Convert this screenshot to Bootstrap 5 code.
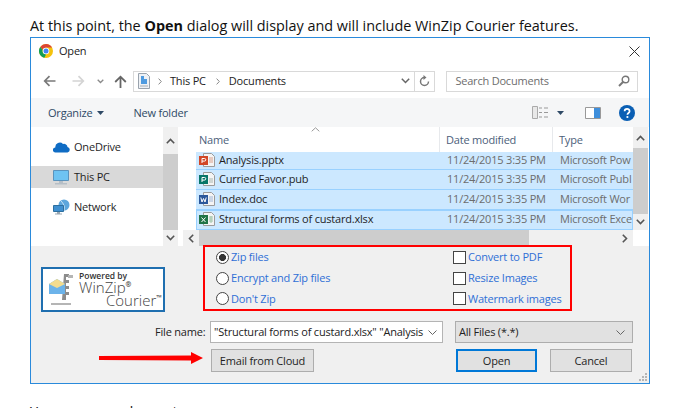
<!doctype html>
<html lang="en">
<head>
<meta charset="utf-8">
<title>Open dialog</title>
<link href="https://cdn.jsdelivr.net/npm/bootstrap@5.3.0/dist/css/bootstrap.min.css" rel="stylesheet">
<style>
html,body{height:408px;overflow:hidden;background:#fff}
body{font-family:"Open Sans","Liberation Sans",sans-serif;color:#1f1f1f}
.intro{margin:0 0 0 30px;padding-top:15px;height:37px;font-size:14.4px;line-height:22px;color:#111;white-space:nowrap}
.intro b{font-weight:700}
.outro{margin:0 0 0 30px;padding-top:17px;font-size:14.4px;line-height:22px;color:#111;white-space:nowrap}
.dlg{margin-left:30px;width:620px;height:347px;border:1px solid #2a8adb;background:#fff;font-size:11px;line-height:14px;letter-spacing:-.2px;position:relative}
.dlg svg{display:block;flex:none}
.titlebar{height:26px;padding:0 9px 0 8px;color:#222}
.titlebar .ttl{margin-left:6px}
.navrow{height:34px;padding:0 11px 0 12px}
.mfwd{margin-left:16px}.mchev{margin-left:12px}.mup{margin-left:10px}
.addr{margin-left:6px;width:303px;height:21px;border:1px solid #d9d9d9}
.addr .seg{color:#222}
.addr .gt{margin:0 8px}
.addr .seg + .gt{margin:0 9px 0 10px}
.addr .refresh{width:20px;height:19px;border-left:1px solid #d9d9d9}
.searchbox{margin-left:11px;width:192px;height:21px;border:1px solid #d9d9d9;padding:0 7px 0 8px;color:#6d6d6d}
.toolbar{height:29px;background:#f5f6f7;padding:0 14px 0 17px;color:#2f4a66}
.mcar{margin-left:5px}.mnew{margin-left:29px}.mcar2{margin-left:9px}.mpane{margin-left:21px}.mhelp{margin-left:18px}
.browse{height:119px;background:#fff}
.navpane{width:132px;padding-top:9px}
.navitem{height:22px;margin-bottom:8px;padding-left:22px;color:#1f1f1f}
.navitem svg{margin-right:4px}
.navitem.on svg{margin-right:5px}
.navitem.on{background:#d9d9d9}
.vbar{width:15px;background:#f0f0f0}
.vbtn{height:16px;flex:none}
.vbtn.t27{height:27px}.vbtn.t21{height:21px}
.vthumb{background:#cdcdcd}
.gapstrip{width:5px}
.fileside{width:450px}
.listhead{height:25px;position:relative;color:#4c607a}
.hcell{height:25px;padding-left:3px}
.hname{width:257px;padding-left:16px;border-right:1px solid #e7e9ec}
.hdate{width:113px;padding-left:6px;border-right:1px solid #e7e9ec}
.htype{padding-left:6px}
.sortcaret{position:absolute;left:128px;top:0}
.frow{height:20px;margin-left:13px;padding-bottom:1px;background:#cce8ff;border-bottom:1px solid #99d1ff;color:#6d6d6d;white-space:nowrap;overflow:hidden}
.frow:first-child{height:18px}
.fname{width:244px;padding-left:3px;color:#1f1f1f;gap:4px}
.fdate{width:113px;padding-left:7px}
.ftype{padding-left:7px}
.frow.last{outline:1px solid #99d1ff;outline-offset:-1px}
.hbar{height:16px;background:#f0f0f0}
.hbtn{width:16px}
.hthumb{width:330px;background:#cdcdcd}
.rightcol{width:15px;background:#f0f0f0}
.cornerwhite{height:16px;background:#fff;flex:none}
.foot{flex:1;background:#f0f0f0;position:relative;padding-left:10px;color:#222}
.footmain{height:75px}
.logobox{width:124px;height:45px;margin-top:21px;border:2px solid #1f6fb0;background:#fff;position:relative;overflow:hidden;padding-left:36px;color:#444;letter-spacing:0}
.logobox svg{position:absolute;left:5px;top:4px}
.lpow{font-size:8.5px;font-weight:600;line-height:10px;margin-top:2px;color:#333}
.lwin{font-size:15px;line-height:13px;font-weight:300}
.lcou{font-size:15px;line-height:13px;font-weight:300;margin-left:27px;white-space:nowrap}
.lwin sup,.lcou sup{font-size:7px;font-weight:700;top:-6px;line-height:0;vertical-align:baseline;position:relative}
.redbox{margin-left:38px;width:369px;height:66px;margin-top:-1px;border:2px solid #f00;padding:0 0 0 11px;color:#2f6fd6;flex:none}
.optcol{width:237px}
.optrow{height:21px;gap:2px}
.redbox .form-check-input{margin:0;width:13px;height:13px;float:none;border:1px solid #444;background-color:#fff;background-image:none;border-radius:0;flex:none;box-shadow:none;opacity:1}
.redbox .form-check-input[type=radio]{border-radius:50%}
.redbox .form-check-input[type=radio]:checked{border-color:#444;background-image:radial-gradient(circle,#333 0 3.2px,#fff 3.8px)}
.fileline{height:22px}
.fnlabel{margin-left:114px;width:55px;flex:none;color:#222}
.fninput{width:233px;height:22px;border:1px solid #b4b4b4;background:#fff;padding:0 5px 0 3px;white-space:nowrap;overflow:hidden}
.fninput svg{margin-left:auto}
.filter{margin-left:12px;width:178px;height:22px;background:#e1e1e1;border:1px solid #adadad;padding:0 7px 0 3px}
.btnline{height:23px;margin-top:6px;position:relative}
.winbtn{height:23px;padding:0;border-radius:0;background:#e1e1e1;border:1px solid #adadad;font-size:11px;line-height:14px;letter-spacing:-.2px;color:#1f1f1f;flex:none}
.redarrow{margin:3px 8px 0 58px}
.bemail{width:103px}
.bopen{margin-left:142px;width:81px;border:2px solid #0078d7}
.bcancel{margin-left:13px;width:82px}
.grip{position:absolute;right:1px;bottom:1px}
</style>
</head>
<body>
<p class="intro">At this point, the <b>Open</b> dialog will display and will include WinZip Courier features.</p>
<div class="dlg d-flex flex-column">
  <div class="titlebar d-flex align-items-center justify-content-between flex-none">
    <div class="d-flex align-items-center">
      <svg width="14" height="14" viewBox="0 0 14 14"><circle cx="7" cy="7" r="7" fill="#f4c20d"/><path d="M7 0a7 7 0 0 1 6.100 3.500H7A3.500 3.500 0 0 0 3.700 6L1.300 2.900A7 7 0 0 1 7 0z" fill="#db4437"/><path d="M1.300 2.900 3.700 6A3.500 3.500 0 0 0 7 10.500L5.400 13.800A7 7 0 0 1 1.300 2.900z" fill="#0f9d58"/><circle cx="7" cy="7" r="3.300" fill="#fff"/><circle cx="7" cy="7" r="2.500" fill="#4285f4"/></svg>
      <span class="ttl">Open</span>
    </div>
    <svg width="11" height="11" viewBox="0 0 11 11"><path d="M.5.500l10 10M10.500.500l-10 10" stroke="#333" fill="none"/></svg>
  </div>
  <div class="navrow d-flex align-items-center flex-none">
    <svg width="13" height="12" viewBox="0 0 13 12"><path d="M12.500 6H2M6.500 1.200 1.700 6l4.800 4.800" stroke="#7a7a7a" stroke-width="1.700" fill="none"/></svg>
    <svg class="mfwd" width="13" height="12" viewBox="0 0 13 12"><path d="M.5 6H11M6.500 1.200 11.300 6l-4.800 4.800" stroke="#d4d4d4" stroke-width="1.700" fill="none"/></svg>
    <svg class="mchev" width="7" height="5" viewBox="0 0 7 5"><path d="M.7.700 3.500 3.500 6.300.7" stroke="#8a8a8a" stroke-width="1.300" fill="none"/></svg>
    <svg class="mup" width="13" height="13" viewBox="0 0 13 13"><path d="M6.500 13V2M1.200 7 6.500 1.700 11.800 7" stroke="#666" stroke-width="1.800" fill="none"/></svg>
    <div class="addr d-flex align-items-center ps-1">
      <svg width="12" height="16" viewBox="0 0 12 16"><path d="M.5.500h8l3 3v12H.5z" fill="#eef1f5" stroke="#9aa3ad"/><path d="M3 3h3v3h3v5H3z" fill="#4f9be0"/><path d="M2 12h8v2H2z" fill="#c9ced4"/></svg>
      <svg class="gt" width="4" height="7" viewBox="0 0 4 7"><path d="M.6.600 3.300 3.500.6 6.400" stroke="#888" fill="none"/></svg>
      <span class="seg">This PC</span>
      <svg class="gt" width="4" height="7" viewBox="0 0 4 7"><path d="M.6.600 3.300 3.500.6 6.400" stroke="#888" fill="none"/></svg>
      <span class="seg">Documents</span>
      <svg class="ms-auto me-1" width="9" height="6" viewBox="0 0 9 6"><path d="M.8.800 4.500 4.500 8.200.8" stroke="#666" stroke-width="1.500" fill="none"/></svg>
      <div class="refresh d-flex align-items-center justify-content-center"><svg width="11" height="12" viewBox="0 0 11 12"><path d="M5.500 2.500a4 4 0 1 0 4 4" stroke="#777" stroke-width="1.500" fill="none"/><path d="M4.500 0v5l3-2.500z" fill="#777"/></svg></div>
    </div>
    <div class="searchbox d-flex align-items-center justify-content-between">
      <span>Search Documents</span>
      <svg width="12" height="12" viewBox="0 0 12 12"><circle cx="7.500" cy="4.500" r="3.300" stroke="#777" stroke-width="1.400" fill="none"/><path d="M5 7 1 11" stroke="#777" stroke-width="2" fill="none"/></svg>
    </div>
  </div>
  <div class="toolbar d-flex align-items-center flex-none">
    <span>Organize</span>
    <svg class="mcar" width="7" height="4" viewBox="0 0 7 4"><path d="M0 0h7L3.500 4z" fill="#2f4a66"/></svg>
    <span class="mnew">New folder</span>
    <svg class="ms-auto" width="16" height="13" viewBox="0 0 16 13"><path d="M.5.500h5v12h-5z" fill="#e8e8e8" stroke="#aaa"/><path d="M7 2h3M7 6.500h3M7 11h3M12 2h4M12 6.500h4M12 11h4" stroke="#999"/></svg>
    <svg class="mcar2" width="7" height="4" viewBox="0 0 7 4"><path d="M0 0h7L3.500 4z" fill="#2f4a66"/></svg>
    <svg class="mpane" width="16" height="12" viewBox="0 0 16 12"><path d="M.5.500h15v11H.5z" fill="#fff" stroke="#999"/><path d="M9 1h6v10H9z" fill="#3f8fdc"/></svg>
    <svg class="mhelp" width="16" height="16" viewBox="0 0 16 16"><circle cx="8" cy="8" r="8" fill="#0a5fb4"/><path d="M5.600 6.200c0-3.200 5-3.200 5 0 0 1.800-2.200 1.800-2.200 3.500" stroke="#fff" stroke-width="1.700" fill="none"/><circle cx="8.400" cy="12" r="1.100" fill="#fff"/></svg>
  </div>
  <div class="browse d-flex flex-none">
    <div class="navpane flex-none">
      <div class="navitem d-flex align-items-center"><svg width="17" height="12" viewBox="0 0 17 12"><path d="M2.500 11.500a2.500 2.500 0 0 1-.2-5A4.500 4.500 0 0 1 10 3a3.500 3.500 0 0 1 4.500 3 2.800 2.800 0 0 1 0 5.500z" fill="#0f6cc4"/></svg><span>OneDrive</span></div>
      <div class="navitem on d-flex align-items-center"><svg width="16" height="15" viewBox="0 0 16 15"><path d="M.5.500h15v10H.5z" fill="#6ec3f2" stroke="#5a93bd"/><path d="M6 11h4v2H6z" fill="#b5bec6"/><path d="M2 13h12v1.500H2z" fill="#b5bec6"/></svg><span>This PC</span></div>
      <div class="navitem d-flex align-items-center"><svg width="17" height="16" viewBox="0 0 17 16"><circle cx="11" cy="6" r="5.500" fill="#5da6dc"/><path d="M8 2c2 2 4 5 3 9" stroke="#d5ebf9" fill="none"/><path d="M.5 6.500h10v6H.5z" fill="#3f8fd0" stroke="#2d6f9f"/><path d="M4 13h3v1.500H4zM2 14.500h7v1H2z" fill="#9aa7b2"/></svg><span>Network</span></div>
    </div>
    <div class="vbar d-flex flex-column flex-none">
      <div class="vbtn t27 d-flex align-items-center justify-content-center"><svg width="9" height="6" viewBox="0 0 9 6"><path d="M.8 5.200 4.500 1.500l3.700 3.700" stroke="#555" stroke-width="1.600" fill="none"/></svg></div>
      <div class="vthumb flex-grow-1"></div>
      <div class="vbtn d-flex align-items-center justify-content-center"><svg width="9" height="6" viewBox="0 0 9 6"><path d="M.8.800 4.500 4.500 8.200.8" stroke="#555" stroke-width="1.600" fill="none"/></svg></div>
    </div>
    <div class="gapstrip flex-none"></div>
    <div class="fileside d-flex flex-column flex-none">
      <div class="listhead d-flex flex-none">
        <div class="hcell hname d-flex align-items-center flex-none">Name</div>
        <div class="hcell hdate d-flex align-items-center flex-none">Date modified</div>
        <div class="hcell htype d-flex align-items-center">Type</div>
        <svg class="sortcaret" width="9" height="5" viewBox="0 0 9 5"><path d="M.7 4.300 4.500.8l3.800 3.500" stroke="#999" fill="none"/></svg>
      </div>
      <div class="flex-grow-1">
        <div class="frow d-flex align-items-center"><div class="fname d-flex align-items-center flex-none"><svg width="16" height="16" viewBox="0 0 16 16"><path d="M4.500 1.500h8l3 3v10h-11z" fill="#f4f4f4" stroke="#9b9b9b"/><path d="M10 6h4M10 8h4M10 10h4" stroke="#d9a08c"/><path d="M0 4h9v9H0z" fill="#d24726"/><path d="M3 11V6.500h2.500a1.200 1.200 0 0 1 0 2.600H3" stroke="#fff" fill="none"/></svg><span>Analysis.pptx</span></div><div class="fdate flex-none">11/24/2015 3:35 PM</div><div class="ftype">Microsoft Pow</div></div>
        <div class="frow d-flex align-items-center"><div class="fname d-flex align-items-center flex-none"><svg width="16" height="16" viewBox="0 0 16 16"><path d="M4.500 1.500h8l3 3v10h-11z" fill="#f4f4f4" stroke="#9b9b9b"/><path d="M10 7h4v5h-4z" fill="#cfd6d3"/><path d="M0 4h9v9H0z" fill="#077568"/><path d="M3 11V6.500h2.500a1.200 1.200 0 0 1 0 2.600H3" stroke="#fff" fill="none"/></svg><span>Curried Favor.pub</span></div><div class="fdate flex-none">11/24/2015 3:35 PM</div><div class="ftype">Microsoft Publ</div></div>
        <div class="frow d-flex align-items-center"><div class="fname d-flex align-items-center flex-none"><svg width="16" height="16" viewBox="0 0 16 16"><path d="M4.500 1.500h8l3 3v10h-11z" fill="#f4f4f4" stroke="#9b9b9b"/><path d="M10 6h4M10 8h4M10 10h4" stroke="#9fb6d8"/><path d="M0 4h9v9H0z" fill="#2b579a"/><path d="M1.800 6.500 3 11l1.500-3.500L6 11l1.200-4.500" stroke="#fff" fill="none"/></svg><span>Index.doc</span></div><div class="fdate flex-none">11/24/2015 3:35 PM</div><div class="ftype">Microsoft Wor</div></div>
        <div class="frow last d-flex align-items-center"><div class="fname d-flex align-items-center flex-none"><svg width="16" height="16" viewBox="0 0 16 16"><path d="M4.500 1.500h8l3 3v10h-11z" fill="#f4f4f4" stroke="#9b9b9b"/><path d="M10 6h4M10 8h4M10 10h4M12 5v7" stroke="#9ec4a8"/><path d="M0 4h9v9H0z" fill="#217346"/><path d="M2.500 6.500l4 4.500M6.500 6.500l-4 4.500" stroke="#fff" fill="none"/></svg><span>Structural forms of custard.xlsx</span></div><div class="fdate flex-none">11/24/2015 3:35 PM</div><div class="ftype">Microsoft Exce</div></div>
      </div>
      <div class="hbar d-flex flex-none">
        <div class="hbtn d-flex align-items-center justify-content-center"><svg width="6" height="9" viewBox="0 0 6 9"><path d="M5.200.8 1.500 4.500l3.700 3.700" stroke="#555" stroke-width="1.600" fill="none"/></svg></div>
        <div class="hthumb"></div>
        <div class="ms-auto hbtn d-flex align-items-center justify-content-center"><svg width="6" height="9" viewBox="0 0 6 9"><path d="M.8.800 4.500 4.500.8 8.200" stroke="#555" stroke-width="1.600" fill="none"/></svg></div>
      </div>
    </div>
    <div class="rightcol d-flex flex-column flex-none">
      <div class="vbtn t21 d-flex align-items-center justify-content-center"><svg width="9" height="6" viewBox="0 0 9 6"><path d="M.8 5.200 4.500 1.500l3.700 3.700" stroke="#555" stroke-width="1.600" fill="none"/></svg></div>
      <div class="vthumb flex-grow-1"></div>
      <div class="vbtn d-flex align-items-center justify-content-center"><svg width="9" height="6" viewBox="0 0 9 6"><path d="M.8.800 4.500 4.500 8.200.8" stroke="#555" stroke-width="1.600" fill="none"/></svg></div>
      <div class="cornerwhite"></div>
    </div>
  </div>
  <div class="foot d-flex flex-column">
    <div class="footmain d-flex align-items-start flex-none">
      <div class="logobox flex-none">
        <svg width="30" height="34" viewBox="0 0 30 34"><path d="M16 1h5v3h-3v3h3v3h-3v3h3v3h-3v3h3v3h-3v5h-4z" fill="#8c8c8c"/><path d="M20 2h5v3h-5zM3 30h20v2H3z" fill="#b5b5b5"/><path d="M1 11 9 6l8 5v10H1z" fill="#6cb3ea"/><path d="M1 11l8-5 8 5-8 4z" fill="#f3dc8f"/></svg>
        <div class="lpow">Powered by</div>
        <div class="lwin">WinZip<sup>®</sup></div>
        <div class="lcou">Courier<sup>™</sup></div>
      </div>
      <div class="redbox d-flex">
        <div class="optcol d-flex flex-column justify-content-center">
          <label class="optrow d-flex align-items-center"><input class="form-check-input" type="radio" name="zipopt" checked><span>Zip files</span></label>
          <label class="optrow d-flex align-items-center"><input class="form-check-input" type="radio" name="zipopt"><span>Encrypt and Zip files</span></label>
          <label class="optrow d-flex align-items-center"><input class="form-check-input" type="radio" name="zipopt"><span>Don't Zip</span></label>
        </div>
        <div class="d-flex flex-column justify-content-center">
          <label class="optrow d-flex align-items-center"><input class="form-check-input" type="checkbox"><span>Convert to PDF</span></label>
          <label class="optrow d-flex align-items-center"><input class="form-check-input" type="checkbox"><span>Resize Images</span></label>
          <label class="optrow d-flex align-items-center"><input class="form-check-input" type="checkbox"><span>Watermark images</span></label>
        </div>
      </div>
    </div>
    <div class="fileline d-flex align-items-center flex-none">
      <span class="fnlabel">File name:</span>
      <div class="fninput d-flex align-items-center flex-none"><span>"Structural forms of custard.xlsx" "Analysis</span><svg width="9" height="5" viewBox="0 0 9 5"><path d="M.5.500 4.500 4.500l4-4" stroke="#666" fill="none"/></svg></div>
      <div class="filter d-flex align-items-center justify-content-between flex-none"><span>All Files (*.*)</span><svg width="9" height="5" viewBox="0 0 9 5"><path d="M.5.500 4.500 4.500l4-4" stroke="#666" fill="none"/></svg></div>
    </div>
    <div class="btnline d-flex flex-none">
      <svg class="redarrow align-self-start" width="104" height="12" viewBox="0 0 104 12"><path d="M0 4 92 3.500V0l12 6-12 6V8.500L0 8z" fill="#f00"/></svg>
      <button type="button" class="btn winbtn bemail">Email from Cloud</button>
      <button type="button" class="btn winbtn bopen">Open</button>
      <button type="button" class="btn winbtn bcancel">Cancel</button>
    </div>
    <svg class="grip" width="10" height="10" viewBox="0 0 10 10"><path d="M7 1h2v2H7zM4 4h2v2H4zM7 4h2v2H7zM1 7h2v2H1zM4 7h2v2H4zM7 7h2v2H7z" fill="#b5b5b5"/></svg>
  </div>
</div>
<p class="outro">You can resend a sent</p>
<script src="https://cdn.jsdelivr.net/npm/bootstrap@5.3.0/dist/js/bootstrap.bundle.min.js"></script>
</body>
</html>
